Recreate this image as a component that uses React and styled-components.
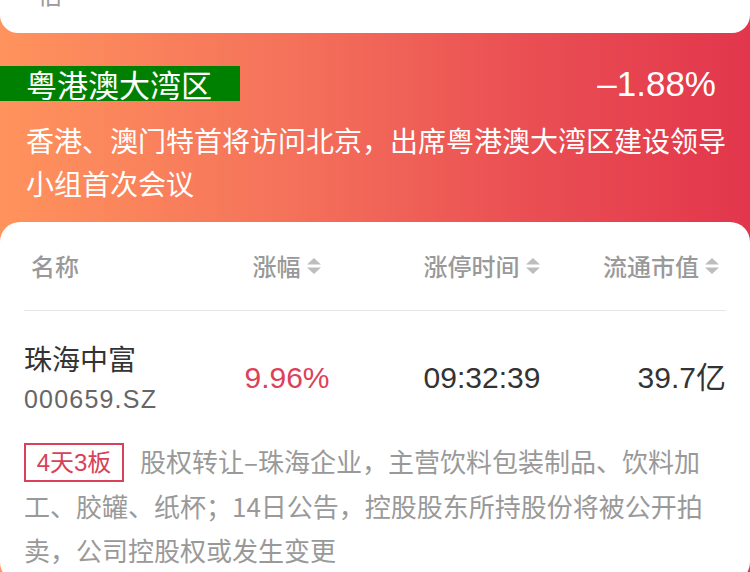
import React from "react";
import styled, { createGlobalStyle } from "styled-components";

const Global = createGlobalStyle`
  html, body {
    margin: 0;
    padding: 0;
  }
  body {
    width: 750px;
    height: 572px;
    overflow: hidden;
    font-family: "Liberation Sans", "Noto Sans CJK SC", sans-serif;
    background: linear-gradient(90deg, #ff935d 0%, #f4705a 40%, #ea4f53 70%, #e2364c 100%);
  }
`;

const Page = styled.div`
  display: flex;
  flex-direction: column;
`;

const TopCard = styled.div`
  height: 33px;
  background: #fff;
  border-radius: 0 0 18px 18px;
  overflow: hidden;
  padding: 0 38px;
`;

const Cut = styled.div`
  margin-top: -21px;
  font-size: 24px;
  line-height: 30px;
  color: #999;
  font-family: "Noto Sans CJK SC", sans-serif;
`;

const Topic = styled.div`
  margin-top: 33px;
  display: flex;
  flex-direction: column;
`;

const TitleRow = styled.div`
  display: flex;
  align-items: center;
  justify-content: space-between;
  height: 35px;
  padding-right: 34px;
`;

const Title = styled.div`
  width: 240px;
  height: 35px;
  box-sizing: border-box;
  padding-left: 26px;
  background: #008000;
  color: #fff;
  font-family: "Noto Sans CJK SC", sans-serif;
  font-size: 31px;
  line-height: 35px;
`;

const Change = styled.div`
  color: #fff;
  font-size: 35px;
  line-height: 35px;
`;

const Summary = styled.p`
  margin: 18px 0 0;
  padding: 0 24px 0 26px;
  color: #fff;
  font-family: "Noto Sans CJK SC", sans-serif;
  font-size: 28px;
  line-height: 43px;
`;

const Card = styled.div`
  margin-top: 17px;
  background: #fff;
  border-radius: 20px;
  padding: 0 24px 10px;
`;

const Grid = styled.div`
  display: grid;
  grid-template-columns: 186px 154px 236px 126px;
  align-items: center;
`;

const Head = styled(Grid)`
  height: 88px;
  border-bottom: 1px solid #e6e6e6;
`;

const HeadCell = styled.div`
  display: flex;
  align-items: center;
  justify-content: ${(p) => p.$align || "center"};
  gap: 5px;
  padding-left: ${(p) => (p.$align === "flex-start" ? "7px" : "0")};
  padding-right: ${(p) => (p.$align === "flex-end" ? "6px" : "0")};
  color: #999;
  font-family: "Noto Sans CJK SC", sans-serif;
  font-weight: 500;
  font-size: 24px;
  line-height: 30px;
`;

const Row = styled(Grid)`
  padding-top: 27px;
`;

const NameCell = styled.div`
  display: flex;
  flex-direction: column;
`;

const Name = styled.div`
  color: #333;
  font-family: "Noto Sans CJK SC", sans-serif;
  font-size: 28px;
  line-height: 40px;
`;

const Code = styled.div`
  margin-top: 3px;
  color: #666;
  font-size: 25px;
  letter-spacing: 1.2px;
  line-height: 36px;
`;

const Value = styled.div`
  color: ${(p) => p.$color || "#333"};
  font-size: 30px;
  line-height: 40px;
  text-align: ${(p) => p.$align || "center"};
`;

const Note = styled.p`
  margin: 22px 0 0;
  width: 700px;
  color: #999;
  font-family: "Noto Sans CJK SC", sans-serif;
  font-size: 26px;
  line-height: 44px;
`;

const Tag = styled.span`
  position: relative;
  top: -2px;
  display: inline-block;
  vertical-align: middle;
  box-sizing: border-box;
  height: 39px;
  width: 100px;
  margin-right: 16px;
  border: 2px solid #d8415a;
  color: #d8415a;
  font-family: "Liberation Sans", "Noto Sans CJK SC", sans-serif;
  font-size: 24px;
  line-height: 35px;
  text-align: center;
`;

const SortIcon = () => (
  <svg width="16" height="18" viewBox="0 0 16 18">
    <path d="M8 1 L15 7.5 L1 7.5 Z" fill="#bdbdbd" />
    <path d="M8 17 L15 10.5 L1 10.5 Z" fill="#bdbdbd" />
  </svg>
);

const columns = [
  { label: "名称", align: "flex-start" },
  { label: "涨幅", sort: true },
  { label: "涨停时间", sort: true },
  { label: "流通市值", sort: true, align: "flex-end" },
];

export default function App() {
  return (
    <Page>
      <Global />
      <TopCard>
        <Cut>估</Cut>
      </TopCard>
      <Topic>
        <TitleRow>
          <Title>粤港澳大湾区</Title>
          <Change>–1.88%</Change>
        </TitleRow>
        <Summary>香港、澳门特首将访问北京，出席粤港澳大湾区建设领导小组首次会议</Summary>
      </Topic>
      <Card>
        <Head>
          {columns.map((c) => (
            <HeadCell key={c.label} $align={c.align}>
              {c.label}
              {c.sort && <SortIcon />}
            </HeadCell>
          ))}
        </Head>
        <Row>
          <NameCell>
            <Name>珠海中富</Name>
            <Code>000659.SZ</Code>
          </NameCell>
          <Value $color="#dd4159">9.96%</Value>
          <Value>09:32:39</Value>
          <Value $align="right">39.7亿</Value>
        </Row>
        <Note>
          <Tag>4天3板</Tag>
          股权转让–珠海企业，主营饮料包装制品、饮料加工、胶罐、纸杯；14日公告，控股股东所持股份将被公开拍卖，公司控股权或发生变更
        </Note>
      </Card>
    </Page>
  );
}
